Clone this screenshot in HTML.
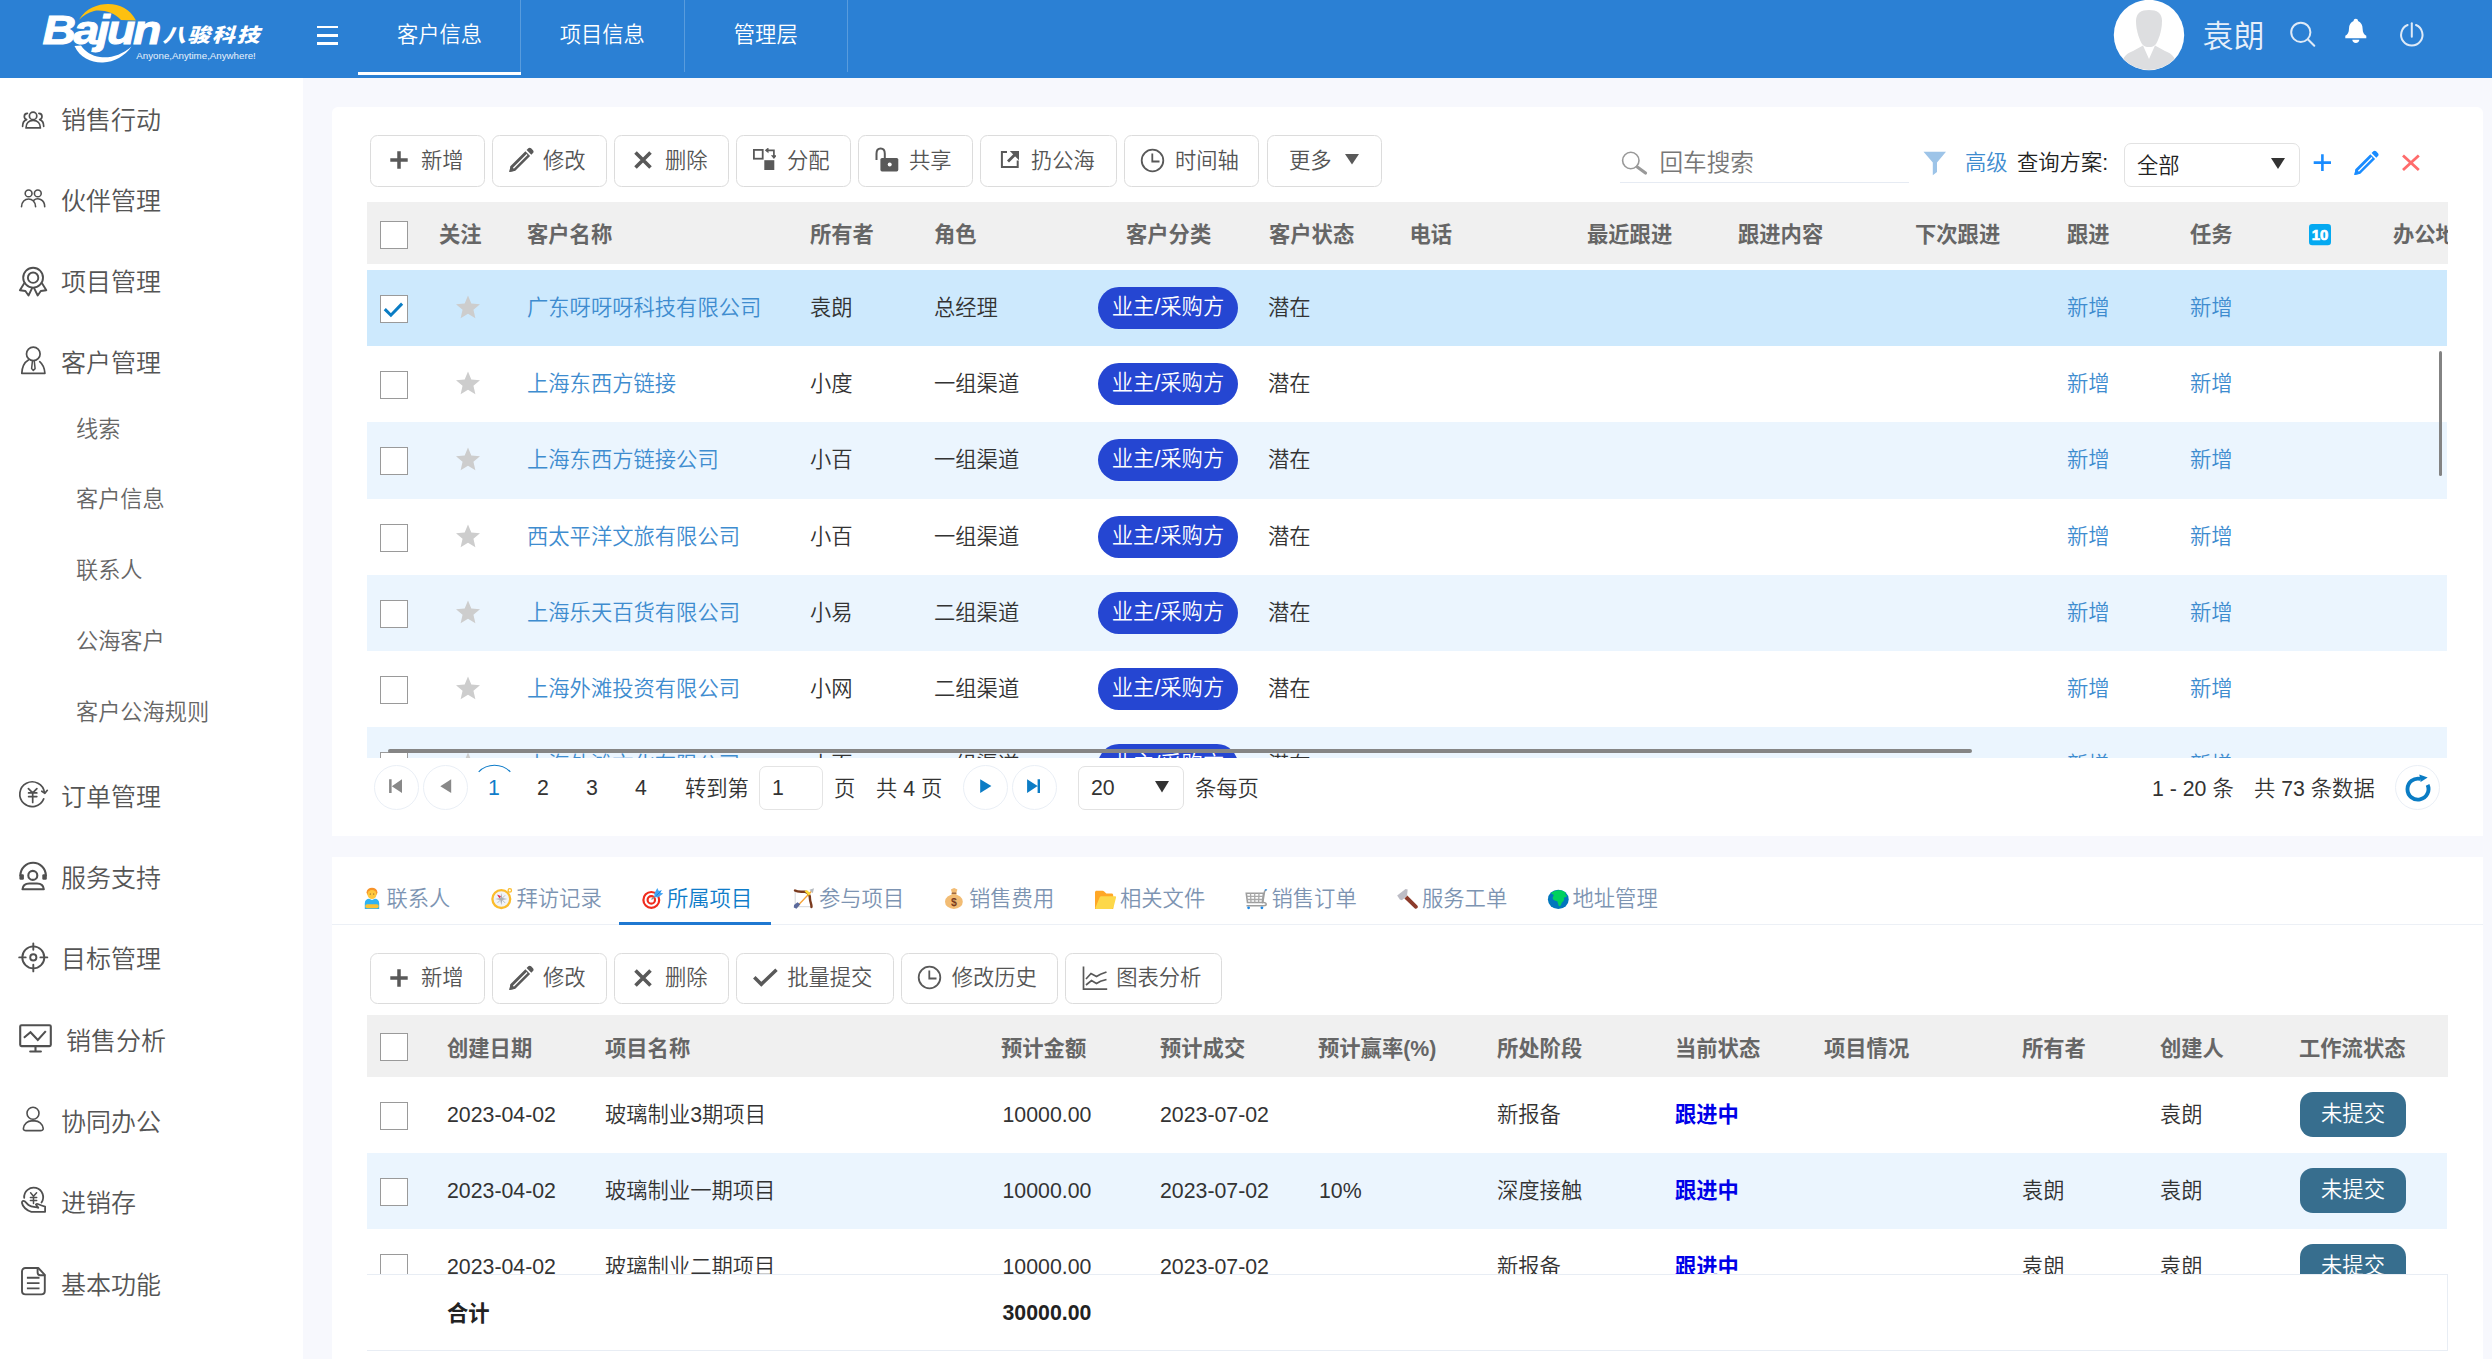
<!DOCTYPE html>
<html lang="zh-CN">
<head>
<meta charset="utf-8">
<title>客户信息</title>
<style>
*{box-sizing:border-box;margin:0;padding:0}
html,body{width:2492px;height:1359px;overflow:hidden}
body{background:#f7f8fd;font-family:"Liberation Sans","Noto Sans CJK SC",sans-serif;color:#333;position:relative;font-size:21.3px;font-weight:350}
.abs{position:absolute}
svg{display:block}
#hdr{position:absolute;left:0;top:0;width:2492px;height:78px;background:#2b80d4;color:#fff}
#hdr .tab{position:absolute;top:0;height:72px;width:163.5px;text-align:center;line-height:70px;font-size:21.3px;border-right:1px solid rgba(255,255,255,.22)}
#hdr .tab.on{height:75px;border-bottom:3px solid #fff;border-right:none}
#hdr .sep{position:absolute;left:520px;top:0;width:1px;height:72px;background:rgba(255,255,255,.22)}
#ham{position:absolute;left:317px;top:26px;width:21px;height:19px}
#ham i{display:block;height:2.4px;background:#fff;margin-bottom:5.8px}
#uname{position:absolute;left:2202.5px;top:1.5px;line-height:70px;font-size:31px;color:#e6effa}
#side{position:absolute;left:0;top:0;width:303px;height:1359px;background:#fff}
.m1{position:absolute;font-size:25px;color:#555;line-height:40px;height:40px;white-space:nowrap}
.m2{position:absolute;left:76px;font-size:22.2px;color:#666;line-height:36px;height:36px;white-space:nowrap}
.mi{position:absolute;left:14px;width:40px;height:40px}
.card{position:absolute;left:332px;width:2151px;background:#fff;border-radius:6px}
.btn{position:absolute;height:51px;border:1px solid #dcdcdc;border-radius:7.5px;background:#fff;color:#555;font-size:21.3px;line-height:48px;white-space:nowrap}
.btn span{position:absolute;left:50px;top:0;line-height:50.4px}
.th{position:absolute;background:#f0f0f0;height:62px}
.th b{position:absolute;top:0;line-height:67px;font-size:21.3px;color:#666;font-weight:bold;white-space:nowrap}
.cb{position:absolute;width:28px;height:28px;border:1px solid #9a9a9a;background:#fff}
.row{position:absolute;left:367px;width:2080px;height:76.2px}
.row span,.row a{position:absolute;top:0;line-height:77.6px;white-space:nowrap;font-size:21.3px}
.row a{color:#3e8ccf}
.row .tag{top:17px;height:42px;line-height:40px;width:140px;border-radius:21px;background:#2546d2;color:#fff;text-align:center;left:731px}
.row .st{position:absolute;left:89px;top:25px}
.row .cb{left:13px;top:25px}
.alt{background:#ebf5fe}
.sel{background:#cde9fd}
.pg{position:absolute;font-size:21.3px;line-height:30px;white-space:nowrap;color:#333}
.circ{position:absolute;width:45px;height:45px;border-radius:50%;border:1px solid #eaeff6;background:#fff}
.tb{position:absolute;height:66px;line-height:82px;font-size:21.3px;white-space:nowrap}
.row .tag2{top:15px;height:45px;line-height:44px;width:106px;border-radius:13px;background:#376e8e;color:#fff;text-align:center}
</style>
</head>
<body>
<div id="side"></div>
<div class="mi" style="top:100px"><svg width="40" height="40" viewBox="0 0 40 40" ><g fill="none" stroke="#505050" stroke-linecap="round" stroke-linejoin="round" stroke-width="1.7"><circle cx="19.1" cy="15.9" r="3.7"/><path d="M12 27.9C12 23 15 20.4 19.1 20.4S26.4 23 26.4 27.9Z"/><path d="M13.4 13.3C11.6 13.4 10.3 14.8 10.3 16.5c0 1.4.9 2.6 2.4 3.1C10 20.3 8.6 23 8.6 26.3"/><path d="M24.9 13.3c1.8.1 3.1 1.500 3.100 3.200 0 1.400-.9 2.600-2.400 3.100 2.700.7 4.100 3.400 4.100 6.700"/></g></svg></div><div class="m1" style="left:61px;top:99.6px">销售行动</div>
<div class="mi" style="top:178px"><svg width="40" height="40" viewBox="0 0 40 40" ><g fill="none" stroke="#505050" stroke-linecap="round" stroke-linejoin="round" stroke-width="1.6"><circle cx="14.6" cy="15.4" r="3.4"/><circle cx="23.8" cy="15.4" r="3.4"/><path d="M7.5 28.8C7.5 18.4 21.6 18.4 21.6 28.8"/><path d="M19.7 22.4C23.500 19 30.7 21.5 30.700 28.800"/></g></svg></div><div class="m1" style="left:61px;top:180.6px">伙伴管理</div>
<div class="mi" style="top:262px"><svg width="40" height="40" viewBox="0 0 40 40" ><g fill="none" stroke="#505050" stroke-linecap="round" stroke-linejoin="round" stroke-width="1.9" stroke-linecap="butt" stroke-linejoin="miter"><circle cx="19.1" cy="15.7" r="9.9"/><circle cx="19.1" cy="15.700" r="5.200"/><path d="M9.9 21.800L5.900 28.300l5.500 .700 3.100 4.500 3.600-7.400"/><path d="M28.300 21.800l4 6.500-5.500 .7-3.100 4.500-3.600-7.400"/></g></svg></div><div class="m1" style="left:61px;top:261.5px">项目管理</div>
<div class="mi" style="top:341px"><svg width="40" height="40" viewBox="0 0 40 40" ><g fill="none" stroke="#505050" stroke-linecap="round" stroke-linejoin="round" stroke-width="1.7"><circle cx="19.3" cy="12.900" r="6.800"/><path d="M14.400 18.900C10.400 21.200 8.100 26 7.800 32.300L30.900 32.300C30.600 27.600 28.900 23.400 25.700 20.700"/><path d="M18.400 20.300L17.600 27.600 19.300 29.400 21.100 27.600 20.300 20.300" stroke-width="1.5"/></g></svg></div><div class="m1" style="left:61px;top:342.5px">客户管理</div>
<div class="mi" style="top:776px"><svg width="40" height="40" viewBox="0 0 40 40" ><g fill="none" stroke="#505050" stroke-linecap="round" stroke-linejoin="round" stroke-width="1.7"><path d="M30.500 16.600A12.400 12.400 0 1 0 29.700 22.900"/><path d="M27.800 15.200L30.900 17.300 33.300 14.300" /><path d="M14.400 12.600L18.700 16.900 22.900 12.600M14.600 16.900H22.800M14.600 20.600H22.800M18.700 16.900V26.400"/></g></svg></div><div class="m1" style="left:61px;top:776.5px">订单管理</div>
<div class="mi" style="top:858px"><svg width="40" height="40" viewBox="0 0 40 40" ><g fill="none" stroke="#505050" stroke-linecap="round" stroke-linejoin="round" stroke-width="2.1"><path d="M6.400 17.500A12.700 12.700 0 0 1 31.800 17.500"/><circle cx="18.800" cy="17.400" r="4.500"/><path d="M8.500 31.300H29.800C29.500 27.300 26.500 25.500 23 25.500H15.300C11.800 25.500 8.800 27.300 8.500 31.300Z"/></g><rect x="5.400" y="16.300" width="4.500" height="5.500" rx="1.200" fill="#505050"/><rect x="28.300" y="16.300" width="4.500" height="5.500" rx="1.200" fill="#505050"/></svg></div><div class="m1" style="left:61px;top:857.8px">服务支持</div>
<div class="mi" style="top:939px"><svg width="40" height="40" viewBox="0 0 40 40" ><g fill="none" stroke="#505050" stroke-linecap="round" stroke-linejoin="round" stroke-width="1.9" stroke-linecap="butt"><circle cx="19.300" cy="18.400" r="11"/><circle cx="19.300" cy="18.400" r="3.100"/><path d="M19.300 4.400V10.800M19.300 25.800V32.400M5.200 18.400H11.700M26.400 18.400H33.300"/></g></svg></div><div class="m1" style="left:61px;top:939.2px">目标管理</div>
<div class="mi" style="top:1020px"><svg width="40" height="40" viewBox="0 0 40 40" ><g fill="none" stroke="#505050" stroke-linecap="round" stroke-linejoin="round" stroke-width="2.1"><rect x="6.200" y="5.200" width="30.600" height="20.900" rx="1.300"/><path d="M9.900 17.700L16.500 12.300 23.800 19.900 31.800 11.100" stroke-linecap="butt" stroke-linejoin="miter"/><path d="M21.500 26.500V31.500M16.200 31.500H26.900"/></g></svg></div><div class="m1" style="left:66px;top:1020.5px">销售分析</div>
<div class="mi" style="top:1101px"><svg width="40" height="40" viewBox="0 0 40 40" ><g fill="none" stroke="#505050" stroke-linecap="round" stroke-linejoin="round" stroke-width="1.600"><circle cx="19" cy="12.200" r="6"/><path d="M9.400 27.400C10 22.600 13.800 19.900 17.500 19.900H20.800C24.600 19.900 28.600 22.600 29.200 27.400 29.400 29 28 29.600 26.500 29.600H12C10.500 29.600 9.200 29 9.400 27.400Z"/></g></svg></div><div class="m1" style="left:61px;top:1101.8px">协同办公</div>
<div class="mi" style="top:1182px"><svg width="40" height="40" viewBox="0 0 40 40" ><g fill="none" stroke="#505050" stroke-linecap="round" stroke-linejoin="round" stroke-width="1.800"><path d="M10.200 15.900A9.500 9.500 0 1 1 27.500 20.500"/><path d="M16.600 10.800L19.500 14.200 22.600 10.800M16.400 15.400H22.700M16.400 18.500H22.700M19.500 14.200V21.500" stroke-width="1.500"/><path d="M9.400 18.900C11.500 18.900 12.500 21.500 14.500 23 17.500 25.200 21.500 25 24.300 25.800 23.500 24.500 22.300 23.500 21.900 22.500 22.500 21.700 23.500 21.700 24.500 22.300 26.500 23.300 28.500 24 31.100 24.600V29.800H17.400C12.500 28.500 8.500 24.500 8 21 7.800 19.800 8.500 18.900 9.400 18.900Z"/></g></svg></div><div class="m1" style="left:61px;top:1183.2px">进销存</div>
<div class="mi" style="top:1263px"><svg width="40" height="40" viewBox="0 0 40 40" ><g fill="none" stroke="#505050" stroke-linecap="round" stroke-linejoin="round" stroke-width="1.900"><path d="M24.300 5H11.500C9.500 5 8 6.500 8 8.500V28C8 30 9.500 31.400 11.500 31.400H27.300C29.300 31.400 30.800 30 30.800 28V11.800Z"/><path d="M23.600 5.500V9.500C23.600 11.200 24.600 12.200 26.300 12.200H30.500"/><path d="M12.900 14.700H25.500M12.900 20.100H25.500M12.900 25.400H25.500" stroke-linecap="butt"/></g></svg></div><div class="m1" style="left:61px;top:1264.5px">基本功能</div>
<div class="m2" style="top:411.6px">线索</div>
<div class="m2" style="top:482.4px">客户信息</div>
<div class="m2" style="top:553.2px">联系人</div>
<div class="m2" style="top:623.9px">公海客户</div>
<div class="m2" style="top:694.7px">客户公海规则</div>
<div id="hdr">
<svg class="abs" style="left:30px;top:0" width="250" height="78" viewBox="0 0 250 78"><path d="M49 19.800C56 8 68 4 78 4 90 4 100 9 106 20.500L91 20C84 12 72 9.500 64 11 58 12.500 53 16 49 19.800Z" fill="#fdc010"/><path d="M44.500 46C50 58 62 63 73 62.500 84 62 95 56 101.500 46.500 92 55 80 58.500 70 57 62 56 55 51.500 51 45.500Z" fill="#fff"/><text transform="translate(12.500 43.800) scale(1.120 1)" font-family="Liberation Sans, sans-serif" font-weight="bold" font-style="italic" font-size="41.500" letter-spacing="-2.300" fill="#fff" stroke="#fff" stroke-width="1">Bajun</text><text transform="translate(132.500 42) scale(1 .84)" font-family="Noto Sans CJK SC, sans-serif" font-weight="900" font-style="italic" font-size="23" fill="#fff" textLength="97" lengthAdjust="spacing">八骏科技</text><text x="106.300" y="59" font-family="Liberation Sans, sans-serif" font-size="9.600" fill="#eaf2fb" textLength="119.500" lengthAdjust="spacingAndGlyphs">Anyone,Anytime,Anywhere!</text></svg>
<div id="ham"><i></i><i></i><i></i></div>
<div class="tab on" style="left:358px;width:163px">客户信息</div><div class="sep"></div>
<div class="tab" style="left:521px">项目信息</div>
<div class="tab" style="left:684.5px">管理层</div>
<svg class="abs" style="left:2113px;top:-1px" width="72" height="72" viewBox="0 0 72 72"><defs><clipPath id="avc"><circle cx="36" cy="36" r="35"/></clipPath></defs><circle cx="36" cy="36" r="35.200" fill="#fff"/><g clip-path="url(#avc)"><path d="M23 22C23 14 28 11 36 11S49 14 49 22C49 32 45 42 43 45 41 47.500 39 48 36 48S31 47.500 29 45C27 42 23 32 23 22Z" fill="#dddee0"/><path d="M8 72C8 60 12 55 20 52L30 46.500 36 60 42 46.500 52 52C60 55 64 60 64 72Z" fill="#dddee0"/></g></svg>
<div id="uname">袁朗</div>
<svg class="abs" style="left:2286px;top:18px" width="34" height="34" viewBox="0 0 34 34"><g fill="none" stroke="#dfeaf7" stroke-width="2" stroke-linecap="round"><circle cx="14.800" cy="14.300" r="9.600"/><path d="M21.800 21.300L28.300 27.800"/></g></svg>
<svg class="abs" style="left:2343px;top:17px" width="26" height="28" viewBox="0 0 26 28"><path fill="#fff" d="M12.800 1.800c-1.300 0-2.200 .900-2.200 2.100C7.500 5 6 8 6 11.500 6 15.500 4.500 17.500 2.300 18.800V21.300H23.300V18.800C21.100 17.500 19.600 15.500 19.600 11.500 19.600 8 18.100 5 15 3.900 15 2.700 14.100 1.800 12.800 1.800Z"/><path fill="#fff" d="M9.300 22.700H16.300C16.300 24.600 14.800 25.900 12.800 25.900S9.300 24.600 9.300 22.700Z"/></svg>
<svg class="abs" style="left:2396px;top:18px" width="32" height="34" viewBox="0 0 32 34"><g fill="none" stroke="#dfeaf7" stroke-width="2" stroke-linecap="round"><path d="M11.600 7A10.700 10.700 0 1 0 20 7"/><path d="M15.800 5.300V18.800"/></g></svg>
</div>
<div class="card" style="top:107px;height:729px;border-radius:6px 6px 0 0"></div>
<div class="btn" style="left:370px;top:135px;height:52px;width:115px"><span>新增</span></div>
<div class="abs" style="left:389.4px;top:149.7px"><svg width="20" height="20" viewBox="0 0 20 20"><path d="M1.300 10H18.700M10 1.300V18.700" stroke="#595959" stroke-width="3.500"/></svg></div>
<div class="btn" style="left:492px;top:135px;height:52px;width:115px"><span>修改</span></div>
<div class="abs" style="left:507.7px;top:146.3px"><svg width="28" height="28" viewBox="0 0 28 28"><g fill="#595959"><path d="M20.300 2.300c.8-.8 2-.8 2.800 0l1.900 1.900c.8 .8 .8 2 0 2.800L23.300 8.700 18.600 4Z"/><path d="M17.400 5.200L22.100 9.900 7.300 24.700 1.300 25.900 2.600 20ZM5.800 22.700L19.500 9l-.9-.9L4.900 21.800Z" fill-rule="evenodd"/><path d="M1.300 25.900L2.600 20 7.300 24.700Z"/></g></svg></div>
<div class="btn" style="left:614px;top:135px;height:52px;width:115px"><span>删除</span></div>
<div class="abs" style="left:633.2px;top:149.9px"><svg width="20" height="20" viewBox="0 0 20 20"><path d="M2.500 2.500L17.500 17.500M17.500 2.500L2.500 17.500" stroke="#595959" stroke-width="3.600"/></svg></div>
<div class="btn" style="left:736px;top:135px;height:52px;width:115px"><span>分配</span></div>
<div class="abs" style="left:752px;top:148px"><svg width="24" height="24" viewBox="0 0 24 24"><rect x="1.900" y="1.900" width="8.800" height="8.800" fill="none" stroke="#595959" stroke-width="1.800"/><rect x="12.300" y="12.200" width="10" height="9.800" fill="#595959"/><path d="M14.500 2.300H21.900V9" fill="none" stroke="#595959" stroke-width="1.700"/><path d="M16.500 -.700L12.800 2.300 16.500 5.300ZM18.900 7.300L21.900 11 24.900 7.300Z" fill="#595959"/></svg></div>
<div class="btn" style="left:858px;top:135px;height:52px;width:115px"><span>共享</span></div>
<div class="abs" style="left:872.8px;top:146.4px"><svg width="28" height="28" viewBox="0 0 28 28"><path d="M3.500 14V7.800C3.500 4.500 5.200 2.600 7.650 2.600S11.800 4.500 11.800 7.800V13" fill="none" stroke="#595959" stroke-width="2"/><rect x="7.400" y="11.900" width="17.900" height="13.500" rx="1.600" fill="#595959"/><circle cx="16.700" cy="18.600" r="2" fill="#fff"/></svg></div>
<div class="btn" style="left:980px;top:135px;height:52px;width:136.5px"><span>扔公海</span></div>
<div class="abs" style="left:999px;top:149.2px"><svg width="22" height="22" viewBox="0 0 22 22"><path d="M8 3H2.900V17.900H18.700V11.500" fill="none" stroke="#595959" stroke-width="2"/><path d="M9 12.500L16 5.500" stroke="#595959" stroke-width="2.800" fill="none"/><path d="M10.800 2H20V11.200Z" fill="#595959"/></svg></div>
<div class="btn" style="left:1124px;top:135px;height:52px;width:135px"><span>时间轴</span></div>
<div class="abs" style="left:1139px;top:146.5px"><svg width="27" height="27" viewBox="0 0 27 27"><g fill="none" stroke="#595959" stroke-width="1.800"><circle cx="13.500" cy="13.500" r="10.800"/><path d="M13.300 6.500V14.500H20.500"/></g></svg></div>
<div class="btn" style="left:1267px;top:135px;height:52px;width:115px"><span style="left:21px">更多</span></div>
<div class="abs" style="left:1345.4px;top:154.4px"><svg width="14" height="11" viewBox="0 0 14 11"><path d="M0 0H14L7 10.600Z" fill="#595959"/></svg></div>
<div class="abs" style="left:1620px;top:182px;width:289px;height:1px;background:#e6ebf3"></div>
<svg class="abs" style="left:1619px;top:148px" width="30" height="30" viewBox="0 0 30 30"><circle cx="11.800" cy="12.500" r="8.200" fill="none" stroke="#999" stroke-width="1.600"/><path d="M18.300 19L26.500 25" stroke="#999" stroke-width="3.200" stroke-linecap="round"/></svg>
<div class="abs" style="left:1659.5px;top:144.5px;font-size:23.6px;line-height:36px;color:#777">回车搜索</div>
<svg class="abs" style="left:1922px;top:150px" width="26" height="27" viewBox="0 0 26 27"><path d="M1.500 1.800H24L15 12.500V22L10.800 25.200V12.500Z" fill="#9dc4e8"/></svg>
<div class="abs" style="left:1965px;top:147px;font-size:21.3px;line-height:32px;color:#3e8ccf">高级</div>
<div class="abs" style="left:2017px;top:147px;font-size:21.3px;line-height:32px;color:#222">查询方案:</div>
<div class="abs" style="left:2124px;top:143px;width:176px;height:44px;border:1px solid #e2e2e2;border-radius:7px;background:#fff"></div>
<div class="abs" style="left:2137px;top:150px;font-size:21.3px;line-height:32px;color:#222">全部</div>
<svg class="abs" style="left:2271px;top:158px" width="14" height="11" viewBox="0 0 14 11"><path d="M0 0H14L7 10.900Z" fill="#333"/></svg>
<svg class="abs" style="left:2312px;top:153px" width="20" height="20" viewBox="0 0 20 20"><path d="M1.700 9.600H19M10.400 1.300V17.900" stroke="#1a8cff" stroke-width="2.600"/></svg>
<svg class="abs" style="left:2353px;top:149px" width="28" height="28" viewBox="0 0 28 28"><g fill="#1a8cff"><path d="M20.300 2.300c.8-.8 2-.8 2.800 0l1.900 1.900c.8 .8 .8 2 0 2.800L23.300 8.700 18.600 4Z"/><path d="M17.400 5.200L22.100 9.900 7.300 24.700 1.300 25.900 2.600 20ZM5.800 22.700L19.500 9l-.9-.9L4.900 21.800Z" fill-rule="evenodd"/><path d="M1.300 25.900L2.600 20 7.300 24.700Z"/></g></svg>
<svg class="abs" style="left:2401px;top:153px" width="20" height="20" viewBox="0 0 20 20"><path d="M2 2.500L17.800 17M17.800 2.500L2 17" stroke="#ff6b6b" stroke-width="2.800"/></svg>
<div class="th" style="left:367px;top:202px;width:2081px;overflow:hidden">
<div class="cb" style="left:13px;top:19px"></div>
<b style="left:72px">关注</b>
<b style="left:160px">客户名称</b>
<b style="left:443px">所有者</b>
<b style="left:567px">角色</b>
<b style="left:759px">客户分类</b>
<b style="left:902px">客户状态</b>
<b style="left:1042.5px">电话</b>
<b style="left:1220px">最近跟进</b>
<b style="left:1371px">跟进内容</b>
<b style="left:1548px">下次跟进</b>
<b style="left:1700px">跟进</b>
<b style="left:1823px">任务</b>
<b style="left:2026px">办公地址</b>
<svg class="abs" style="left:1942px;top:22px" width="22" height="22" viewBox="0 0 22 22"><rect x="0" y="0" width="22" height="21.300" rx="3.200" fill="#04a9f1"/><text x="11" y="16.200" text-anchor="middle" font-family="Liberation Sans, sans-serif" font-weight="bold" font-size="14.500" fill="#fff" stroke="#fff" stroke-width=".7" textLength="16.500" lengthAdjust="spacingAndGlyphs">10</text></svg>
</div>
<div class="abs" style="left:0;top:270px;width:2492px;height:488px;overflow:hidden">
<div class="row sel" style="top:0.00px">
<div class="cb"><svg width="26" height="26" viewBox="0 0 26 26"><path d="M3.800 13.100L9.900 19.200 21.100 7.600" fill="none" stroke="#0a7cc4" stroke-width="3"/></svg></div>
<svg class="st" width="24" height="24" viewBox="0 0 26 25"><path fill="#cdcdcd" d="M13 0l3.600 8.600 9.400.8-7.100 6.200 2.100 9.200L13 19.900 5 24.800l2.100-9.200L0 9.400l9.400-.8z"/></svg>
<a style="left:160px">广东呀呀呀科技有限公司</a><span style="left:443px">袁朗</span><span style="left:567px">总经理</span>
<span class="tag">业主/采购方</span><span style="left:901px">潜在</span>
<a style="left:1700px">新增</a><a style="left:1823px">新增</a>
</div>
<div class="row " style="top:76.19px">
<div class="cb"></div>
<svg class="st" width="24" height="24" viewBox="0 0 26 25"><path fill="#cdcdcd" d="M13 0l3.600 8.600 9.400.8-7.100 6.200 2.100 9.200L13 19.900 5 24.800l2.100-9.200L0 9.400l9.400-.8z"/></svg>
<a style="left:160px">上海东西方链接</a><span style="left:443px">小度</span><span style="left:567px">一组渠道</span>
<span class="tag">业主/采购方</span><span style="left:901px">潜在</span>
<a style="left:1700px">新增</a><a style="left:1823px">新增</a>
</div>
<div class="row alt" style="top:152.38px">
<div class="cb"></div>
<svg class="st" width="24" height="24" viewBox="0 0 26 25"><path fill="#cdcdcd" d="M13 0l3.600 8.600 9.400.8-7.100 6.200 2.100 9.200L13 19.900 5 24.800l2.100-9.200L0 9.400l9.400-.8z"/></svg>
<a style="left:160px">上海东西方链接公司</a><span style="left:443px">小百</span><span style="left:567px">一组渠道</span>
<span class="tag">业主/采购方</span><span style="left:901px">潜在</span>
<a style="left:1700px">新增</a><a style="left:1823px">新增</a>
</div>
<div class="row " style="top:228.57px">
<div class="cb"></div>
<svg class="st" width="24" height="24" viewBox="0 0 26 25"><path fill="#cdcdcd" d="M13 0l3.600 8.600 9.400.8-7.100 6.200 2.100 9.200L13 19.900 5 24.800l2.100-9.200L0 9.400l9.400-.8z"/></svg>
<a style="left:160px">西太平洋文旅有限公司</a><span style="left:443px">小百</span><span style="left:567px">一组渠道</span>
<span class="tag">业主/采购方</span><span style="left:901px">潜在</span>
<a style="left:1700px">新增</a><a style="left:1823px">新增</a>
</div>
<div class="row alt" style="top:304.76px">
<div class="cb"></div>
<svg class="st" width="24" height="24" viewBox="0 0 26 25"><path fill="#cdcdcd" d="M13 0l3.600 8.600 9.400.8-7.100 6.200 2.100 9.200L13 19.900 5 24.800l2.100-9.200L0 9.400l9.400-.8z"/></svg>
<a style="left:160px">上海乐天百货有限公司</a><span style="left:443px">小易</span><span style="left:567px">二组渠道</span>
<span class="tag">业主/采购方</span><span style="left:901px">潜在</span>
<a style="left:1700px">新增</a><a style="left:1823px">新增</a>
</div>
<div class="row " style="top:380.95px">
<div class="cb"></div>
<svg class="st" width="24" height="24" viewBox="0 0 26 25"><path fill="#cdcdcd" d="M13 0l3.600 8.600 9.400.8-7.100 6.200 2.100 9.200L13 19.900 5 24.800l2.100-9.200L0 9.400l9.400-.8z"/></svg>
<a style="left:160px">上海外滩投资有限公司</a><span style="left:443px">小网</span><span style="left:567px">二组渠道</span>
<span class="tag">业主/采购方</span><span style="left:901px">潜在</span>
<a style="left:1700px">新增</a><a style="left:1823px">新增</a>
</div>
<div class="row alt" style="top:457.14px">
<div class="cb"></div>
<svg class="st" width="24" height="24" viewBox="0 0 26 25"><path fill="#cdcdcd" d="M13 0l3.600 8.600 9.400.8-7.100 6.200 2.100 9.200L13 19.900 5 24.800l2.100-9.200L0 9.400l9.400-.8z"/></svg>
<a style="left:160px">上海外滩文化有限公司</a><span style="left:443px">小百</span><span style="left:567px">一组渠道</span>
<span class="tag">业主/采购方</span><span style="left:901px">潜在</span>
<a style="left:1700px">新增</a><a style="left:1823px">新增</a>
</div>
</div>
<div class="abs" style="left:388px;top:749px;width:1584px;height:4px;border-radius:2px;background:#858585"></div>
<div class="abs" style="left:2439px;top:351px;width:3px;height:125px;border-radius:1.5px;background:#838383"></div>
<div class="circ" style="left:374px;top:765px"></div><div class="abs" style="left:389px;top:779px"><svg width="14" height="15" viewBox="0 0 14 15"><path d="M.1 .3H2.600V14H.1ZM13 .3V14L2.800 7.150Z" fill="#888"/></svg></div>
<div class="circ" style="left:423px;top:765px"></div><div class="abs" style="left:440px;top:779px"><svg width="12" height="15" viewBox="0 0 12 15"><path d="M11.200 .3V14L.3 7.150Z" fill="#888"/></svg></div>
<svg class="abs" style="left:472px;top:764px" width="46" height="12" viewBox="0 0 46 12"><path d="M6.700 7.800A22.300 22.300 0 0 1 38.300 7.800" fill="none" stroke="#0f7cc9" stroke-width="1.200"/></svg>
<div class="pg" style="left:488px;top:773px;color:#0f7cc9">1</div>
<div class="pg" style="left:537px;top:773px;color:#333">2</div>
<div class="pg" style="left:586px;top:773px;color:#333">3</div>
<div class="pg" style="left:635px;top:773px;color:#333">4</div>
<div class="pg" style="left:685px;top:774px">转到第</div>
<div class="abs" style="left:759px;top:766px;width:64px;height:44px;border:1px solid #e4e4e4;border-radius:7px;background:#fff"></div>
<div class="pg" style="left:772px;top:773px">1</div>
<div class="pg" style="left:834px;top:774px">页</div>
<div class="pg" style="left:876px;top:773.6px">共 4 页</div>
<div class="circ" style="left:963px;top:765px"></div><div class="abs" style="left:980px;top:779.3px"><svg width="12" height="15" viewBox="0 0 12 15"><path d="M.2 .3V13.900L11.400 7.100Z" fill="#0c7cc5"/></svg></div>
<div class="circ" style="left:1012px;top:765px"></div><div class="abs" style="left:1027px;top:779.3px"><svg width="14" height="15" viewBox="0 0 14 15"><path d="M10.600 .3H13V13.900H10.600ZM.1 .3V13.900L10.600 7.100Z" fill="#0c7cc5"/></svg></div>
<div class="abs" style="left:1078px;top:766px;width:106px;height:44px;border:1px solid #e2e2e2;border-radius:7px;background:#fff"></div>
<div class="pg" style="left:1091px;top:773px">20</div>
<svg class="abs" style="left:1155px;top:781px" width="14" height="12" viewBox="0 0 14 12"><path d="M0 0H14L7 11.500Z" fill="#333"/></svg>
<div class="pg" style="left:1195px;top:774px">条每页</div>
<div class="pg" style="left:2152px;top:773.6px">1 - 20 条</div>
<div class="pg" style="left:2254px;top:773.6px">共 73 条数据</div>
<div class="circ" style="left:2395px;top:765px"></div><div class="abs" style="left:2404px;top:773.5px"><svg width="28" height="28" viewBox="0 0 28 28"><path d="M16.400 4.900A10.500 10.500 0 1 0 23.600 10.900" fill="none" stroke="#0a7cc4" stroke-width="3.900"/><path d="M15.300 .4L23.700 3.600 16.600 7.900Z" fill="#0a7cc4"/></svg></div>
<div class="card" style="top:857px;height:520px;border-radius:0"></div>
<div class="abs" style="left:332px;top:924px;width:2151px;height:1px;background:#ecf0f6"></div>
<div class="tb" style="left:386.5px;top:858px;color:#7d94b2">联系人</div>
<svg class="abs" style="left:360px;top:886px" width="26" height="26" viewBox="360 886 26 26"><ellipse cx="372" cy="892.300" rx="5.400" ry="4.500" fill="#f79329"/><ellipse cx="372" cy="894.500" rx="4.500" ry="4.500" fill="#ffc83d"/><circle cx="370.300" cy="894" r=".600" fill="#6b4a2a"/><circle cx="373.700" cy="894" r=".600" fill="#6b4a2a"/><path d="M364.800 909V903.200C364.800 900.300 366.800 899 369 898.800L372 900 375 898.800C377.200 899 379.200 900.300 379.200 903.200V909Z" fill="#2fb3f1"/><rect x="365.300" y="904.300" width="13.400" height="4" rx="1.800" fill="#fcc232"/></svg>
<div class="tb" style="left:516.5px;top:858px;color:#7d94b2">拜访记录</div>
<svg class="abs" style="left:488px;top:886px" width="26" height="26" viewBox="488 886 26 26"><circle cx="509.800" cy="890.400" r="1.700" fill="none" stroke="#fbbc2c" stroke-width="1.300"/><circle cx="501.300" cy="899.100" r="8.900" fill="#f1f3f7" stroke="#fbbc2c" stroke-width="2.300"/><path d="M501.300 893L502.300 898.100 507.400 899.100 502.300 900.100 501.300 905.200 500.300 900.100 495.200 899.100 500.300 898.100Z" fill="#a9adb3"/><path d="M497.500 895.300L500.300 898.100M505.100 895.300L502.300 898.100M497.500 902.900L500.300 900.100M505.100 902.900L502.300 900.100" stroke="#b9bdc3" stroke-width="1"/><path d="M497.200 894.400L501 896.200 499.300 898.300Z" fill="#e8274b"/></svg>
<div class="tb" style="left:667px;top:858px;color:#0f7cc9">所属项目</div>
<svg class="abs" style="left:640px;top:886px" width="26" height="26" viewBox="640 886 26 26"><circle cx="651.300" cy="899.900" r="7.900" fill="#fff" stroke="#f02b1d" stroke-width="2.200"/><circle cx="651.300" cy="899.900" r="3.700" fill="#fff" stroke="#f02b1d" stroke-width="2.200"/><path d="M651.500 899.500L657 894.500" stroke="#8a8f96" stroke-width="1.100"/><path d="M654.300 893.600L657.300 888 658.800 891 662 890 660.300 892.800 663.300 893.600 657.800 897.600 654.600 896.800Z" fill="#42a5f5"/><path d="M656.200 895.600L660.800 891.400" stroke="#1e7fd6" stroke-width="1"/></svg>
<div class="tb" style="left:819px;top:858px;color:#7d94b2">参与项目</div>
<svg class="abs" style="left:790px;top:886px" width="26" height="26" viewBox="790 886 26 26"><path d="M795.200 890.600V906.700H811.200" fill="none" stroke="#cfd2d6" stroke-width=".9"/><path d="M795 890.500C798 892.500 802 891.500 805 891.800 808.500 892.500 810 896 810 899 810 902 811.800 904 811.500 907" fill="none" stroke="#7a3a1e" stroke-width="2.400" stroke-linecap="round"/><path d="M796.300 907.300L811.500 891.300" stroke="#f5a134" stroke-width="1.300"/><path d="M804.500 891.300L809 895.800 810.500 893.500 806.800 890Z" fill="#fdd835"/><path d="M809.500 889.800L814 888.300 812.800 893.200Z" fill="#b5bac0"/><path d="M794 905L797.500 902.200 800.300 904.300 796.500 908.800 793.800 907.500Z" fill="#5c6a9c"/></svg>
<div class="tb" style="left:969px;top:858px;color:#7d94b2">销售费用</div>
<svg class="abs" style="left:942px;top:886px" width="26" height="26" viewBox="942 886 26 26"><path d="M950.900 889.600L952.300 888.800 954.100 888 955.900 888.800 957.400 889.600 956.300 893H952Z" fill="#f2bc74"/><ellipse cx="953.900" cy="901.700" rx="8.900" ry="7.300" fill="#f2bc74"/><path d="M951.500 893.500C951.500 892.300 956.500 892.300 956.500 893.500V895H951.500Z" fill="#f2bc74"/><rect x="951.800" y="892.600" width="4.500" height="1.200" fill="#8a5636"/><text x="954" y="906" text-anchor="middle" font-family="Liberation Sans, sans-serif" font-weight="bold" font-size="10.500" fill="#7a3b1d">$</text></svg>
<div class="tb" style="left:1120px;top:858px;color:#7d94b2">相关文件</div>
<svg class="abs" style="left:1092px;top:886px" width="26" height="26" viewBox="1092 886 26 26"><path d="M1095 892.300C1095 891.400 1095.700 890.800 1096.500 890.800H1102.500C1103.200 890.800 1103.700 891 1104.200 891.500L1106.300 893.500H1111.500C1112.500 893.500 1113.200 894.200 1113.200 895.200V908.900H1095Z" fill="#ffa726"/><path d="M1099.700 897.300C1100 896.600 1100.500 896.300 1101.300 896.300H1115C1115.900 896.300 1116.300 896.900 1116 897.800L1113.500 907.600C1113.300 908.500 1112.700 908.900 1111.800 908.900H1096.500C1095.600 908.900 1095.200 908.200 1095.500 907.400Z" fill="#fdd84a"/></svg>
<div class="tb" style="left:1271.5px;top:858px;color:#7d94b2">销售订单</div>
<svg class="abs" style="left:1243px;top:886px" width="26" height="26" viewBox="1243 886 26 26"><path d="M1246.300 893.300H1263.500L1262.300 902.500H1247.500Z" fill="#fff" stroke="#9e9e9e" stroke-width="1.600"/><path d="M1250.500 893.300L1251 902.500M1254.700 893.300L1254.800 902.500M1259 893.300L1258.600 902.500M1246.700 896.400H1263.200M1247.100 899.500H1262.800" stroke="#a9a9a9" stroke-width="1.300"/><path d="M1266.300 890L1264.600 891.200 1262.800 902.600C1264.800 902.300 1266.200 903 1266.200 904.200 1266.200 905.300 1265.200 905.700 1263.500 905.700H1246.500" fill="none" stroke="#9e9e9e" stroke-width="1.500"/><path d="M1264.800 889.200H1267.300L1266.400 890.600H1264.800Z" fill="#1e88e5"/><circle cx="1248.600" cy="907.800" r="1.400" fill="#1e88e5"/><circle cx="1261.900" cy="907.800" r="1.400" fill="#1e88e5"/></svg>
<div class="tb" style="left:1422px;top:858px;color:#7d94b2">服务工单</div>
<svg class="abs" style="left:1394px;top:886px" width="26" height="26" viewBox="1394 886 26 26"><path d="M1404.400 898.400L1407.300 895.500 1417.300 905.500C1418.100 906.300 1418.100 907.300 1417.300 908.100 1416.500 909 1415.400 909 1414.600 908.300Z" fill="#8d3b2b"/><path d="M1397.200 895.500L1405.500 889 1407.700 889.400 1407 895.700 1401.900 900.300 1399.800 899.500Z" fill="#bdbdc6"/></svg>
<div class="tb" style="left:1572.5px;top:858px;color:#7d94b2">地址管理</div>
<svg class="abs" style="left:1545px;top:886px" width="26" height="26" viewBox="1545 886 26 26"><ellipse cx="1558.300" cy="899.400" rx="10.400" ry="9.600" fill="#0277bd"/><path d="M1551.500 892.800C1553.500 890.800 1557 890 1560 890.300 1562.500 890.600 1564.500 891.500 1565.800 892.800 1564.800 893.600 1565.200 894.800 1566.500 895.200 1567.200 896.200 1566.500 897.500 1565.200 897.200 1564 897 1563.500 897.800 1564 898.800 1564.500 900 1563.500 901 1562.500 902 1561.300 903 1561.500 904.500 1560.500 905.800 1559.800 906.500 1558.800 906.300 1558.500 905.300 1558 903.800 1557.800 902.500 1557.300 901.200 1556 900.800 1554.500 900.800 1553.500 899.800 1552.500 898.800 1552.300 897.300 1553.300 896.200 1554.300 895.200 1553.500 894.500 1552.500 894.200 1551.500 894 1551 893.500 1551.500 892.800Z" fill="#00d15e"/></svg>
<div class="abs" style="left:619px;top:922px;width:152px;height:3px;background:#1f78d1"></div>
<div class="btn" style="left:370px;top:953px;height:51px;width:115px"><span style="left:50px;line-height:49.4px">新增</span></div>
<div class="abs" style="left:389.4px;top:967.7px"><svg width="20" height="20" viewBox="0 0 20 20"><path d="M1.300 10H18.700M10 1.300V18.700" stroke="#595959" stroke-width="3.500"/></svg></div>
<div class="btn" style="left:492px;top:953px;height:51px;width:115px"><span style="left:50px;line-height:49.4px">修改</span></div>
<div class="abs" style="left:507.7px;top:964.3px"><svg width="28" height="28" viewBox="0 0 28 28"><g fill="#595959"><path d="M20.300 2.300c.8-.8 2-.8 2.800 0l1.900 1.900c.8 .8 .8 2 0 2.800L23.300 8.700 18.600 4Z"/><path d="M17.400 5.200L22.100 9.900 7.300 24.700 1.300 25.900 2.600 20ZM5.800 22.700L19.500 9l-.9-.9L4.900 21.800Z" fill-rule="evenodd"/><path d="M1.300 25.900L2.600 20 7.300 24.700Z"/></g></svg></div>
<div class="btn" style="left:614px;top:953px;height:51px;width:115px"><span style="left:50px;line-height:49.4px">删除</span></div>
<div class="abs" style="left:633.2px;top:967.9px"><svg width="20" height="20" viewBox="0 0 20 20"><path d="M2.500 2.500L17.500 17.500M17.500 2.500L2.500 17.500" stroke="#595959" stroke-width="3.600"/></svg></div>
<div class="btn" style="left:736px;top:953px;height:51px;width:157.5px"><span style="left:50.2px;line-height:49.4px">批量提交</span></div>
<div class="abs" style="left:751px;top:965.5px"><svg width="28" height="24" viewBox="0 0 28 24"><path d="M3.300 11.300L10.300 18.300 25.500 3.800" fill="none" stroke="#595959" stroke-width="3.500"/></svg></div>
<div class="btn" style="left:901px;top:953px;height:51px;width:157px"><span style="left:49.7px;line-height:49.4px">修改历史</span></div>
<div class="abs" style="left:916.1px;top:964.1px"><svg width="27" height="27" viewBox="0 0 27 27"><g fill="none" stroke="#595959" stroke-width="1.800"><circle cx="13.500" cy="13.500" r="10.800"/><path d="M13.300 6.500V14.500H20.500"/></g></svg></div>
<div class="btn" style="left:1065px;top:953px;height:51px;width:157px"><span style="left:50.2px;line-height:49.4px">图表分析</span></div>
<div class="abs" style="left:1080.5px;top:964.5px"><svg width="28" height="28" viewBox="0 0 28 28"><g fill="none" stroke="#595959" stroke-width="1.700"><path d="M2.500 1.600V24.200H26.200"/><path d="M5 14L10 8.500 15.500 11.500 19.500 9.300 25.500 7"/><path d="M5 20L10.500 15.500 15.500 18.500 19.500 16.300 25.500 14.500"/></g></svg></div>
<div class="th" style="left:367px;top:1015px;width:2081px">
<div class="cb" style="left:13px;top:18px"></div>
<b style="left:80px;line-height:68.4px">创建日期</b>
<b style="left:238px;line-height:68.4px">项目名称</b>
<b style="left:634px;line-height:68.4px">预计金额</b>
<b style="left:793px;line-height:68.4px">预计成交</b>
<b style="left:951px;line-height:68.4px">预计赢率(%)</b>
<b style="left:1130px;line-height:68.4px">所处阶段</b>
<b style="left:1308px;line-height:68.4px">当前状态</b>
<b style="left:1457px;line-height:68.4px">项目情况</b>
<b style="left:1655px;line-height:68.4px">所有者</b>
<b style="left:1793px;line-height:68.4px">创建人</b>
<b style="left:1932px;line-height:68.4px">工作流状态</b>
</div>
<div class="abs" style="left:0;top:1077px;width:2492px;height:197px;overflow:hidden">
<div class="row " style="top:0.0px">
<div class="cb" style="top:25px"></div>
<span style="left:80px">2023-04-02</span><span style="left:238px">玻璃制业3期项目</span><span style="left:635.5px">10000.00</span><span style="left:793px">2023-07-02</span>
<span style="left:952px"></span><span style="left:1130px">新报备</span><span style="left:1308px;color:#0000e8;font-weight:bold">跟进中</span>
<span style="left:1655px"></span><span style="left:1793px">袁朗</span><span class="tag2" style="left:1933px">未提交</span>
</div>
<div class="row alt" style="top:76.1px">
<div class="cb" style="top:25px"></div>
<span style="left:80px">2023-04-02</span><span style="left:238px">玻璃制业一期项目</span><span style="left:635.5px">10000.00</span><span style="left:793px">2023-07-02</span>
<span style="left:952px">10%</span><span style="left:1130px">深度接触</span><span style="left:1308px;color:#0000e8;font-weight:bold">跟进中</span>
<span style="left:1655px">袁朗</span><span style="left:1793px">袁朗</span><span class="tag2" style="left:1933px">未提交</span>
</div>
<div class="row " style="top:152.2px">
<div class="cb" style="top:25px"></div>
<span style="left:80px">2023-04-02</span><span style="left:238px">玻璃制业二期项目</span><span style="left:635.5px">10000.00</span><span style="left:793px">2023-07-02</span>
<span style="left:952px"></span><span style="left:1130px">新报备</span><span style="left:1308px;color:#0000e8;font-weight:bold">跟进中</span>
<span style="left:1655px">袁朗</span><span style="left:1793px">袁朗</span><span class="tag2" style="left:1933px">未提交</span>
</div>
</div>
<div class="abs" style="left:367px;top:1274px;width:2081px;height:77px;border:1px solid #e8edf4;border-left:none;background:#fff"></div>
<div class="abs" style="left:447px;top:1295.5px;font-size:21.3px;line-height:36px;font-weight:bold;color:#222">合计</div>
<div class="abs" style="left:1002.5px;top:1295.3px;font-size:21.3px;line-height:36px;font-weight:bold;color:#222">30000.00</div>
</body>
</html>
